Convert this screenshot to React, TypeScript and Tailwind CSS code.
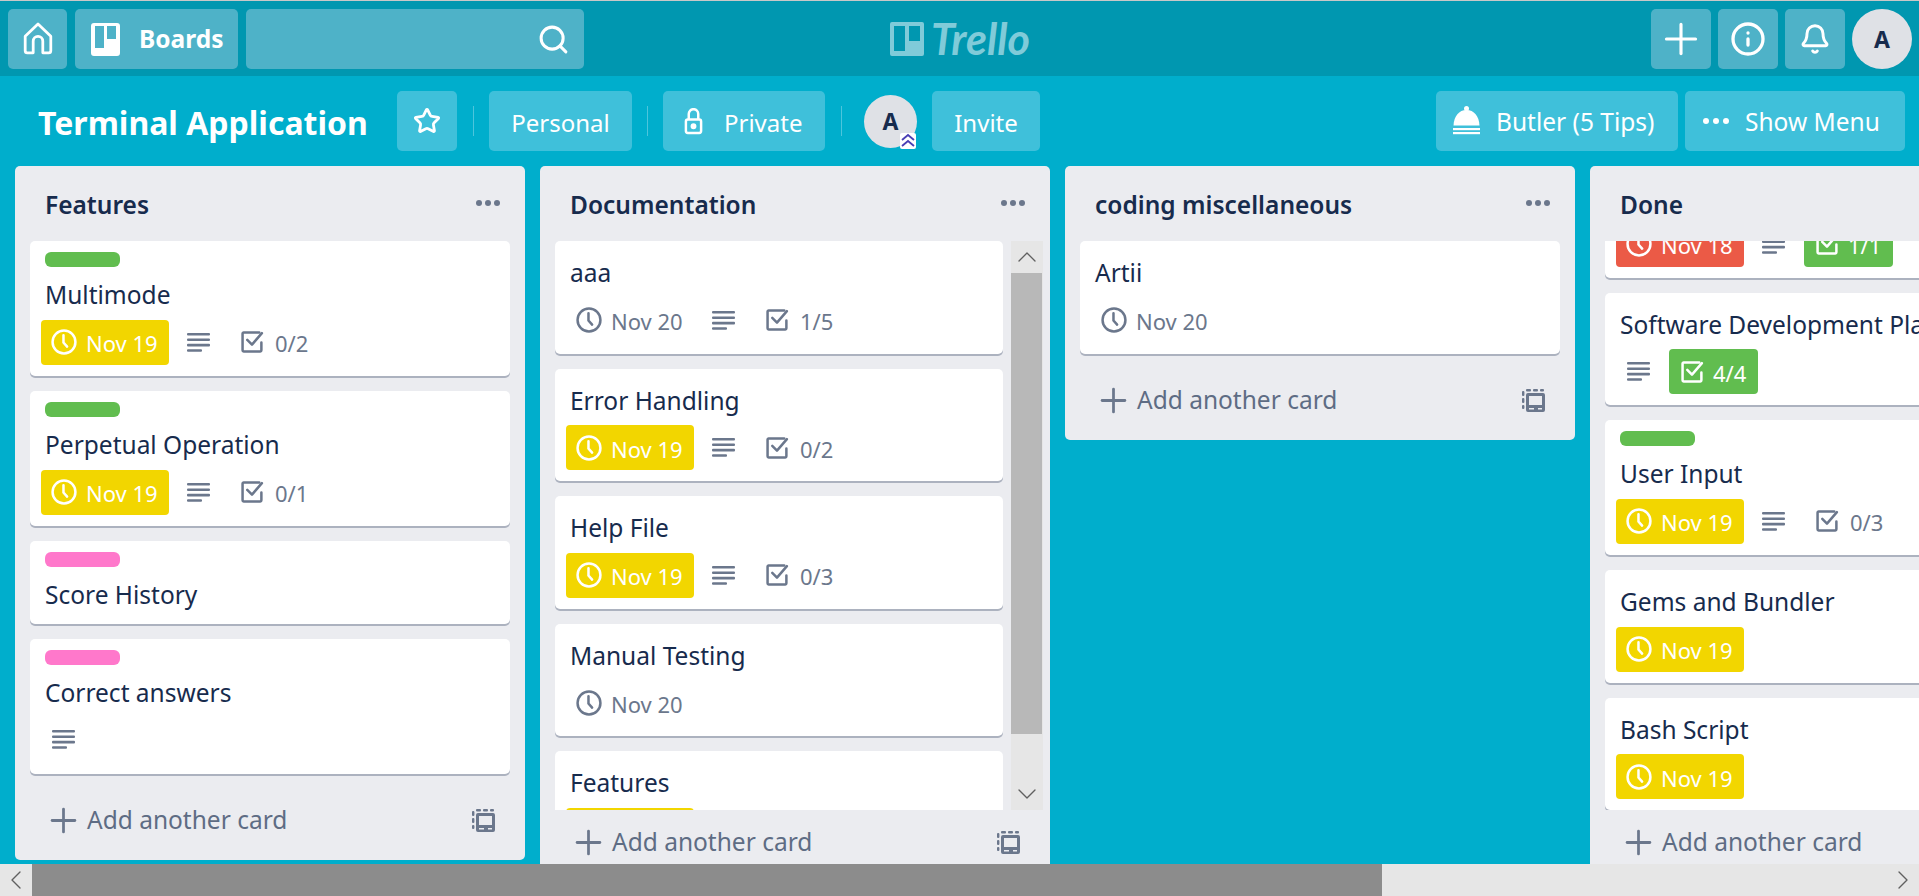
import { Bell, ChevronDown, ChevronLeft, ChevronRight, ChevronUp, Info, Plus, Search, Star } from 'lucide-react';
import type { ReactNode } from 'react';

type CardData = {
    title: string;
    label?: 'green' | 'pink';
    date?: string;
    dateTone?: 'yellow' | 'red' | 'plain';
    desc?: boolean;
    check?: string;
    checkDone?: boolean;
};

const features: CardData[] = [
    { title: 'Multimode', label: 'green', date: 'Nov 19', dateTone: 'yellow', desc: true, check: '0/2' },
    { title: 'Perpetual Operation', label: 'green', date: 'Nov 19', dateTone: 'yellow', desc: true, check: '0/1' },
    { title: 'Score History', label: 'pink' },
    { title: 'Correct answers', label: 'pink', desc: true },
];

const documentation: CardData[] = [
    { title: 'aaa', date: 'Nov 20', dateTone: 'plain', desc: true, check: '1/5' },
    { title: 'Error Handling', date: 'Nov 19', dateTone: 'yellow', desc: true, check: '0/2' },
    { title: 'Help File', date: 'Nov 19', dateTone: 'yellow', desc: true, check: '0/3' },
    { title: 'Manual Testing', date: 'Nov 20', dateTone: 'plain' },
    // only the top edge of this badge shows above the fold
    { title: 'Features', date: ' ', dateTone: 'yellow' },
];

const done: CardData[] = [
    // scrolled up, the title is out of view
    { title: '', date: 'Nov 18', dateTone: 'red', desc: true, check: '1/1', checkDone: true },
    { title: 'Software Development Plan', desc: true, check: '4/4', checkDone: true },
    { title: 'User Input', label: 'green', date: 'Nov 19', dateTone: 'yellow', desc: true, check: '0/3' },
    { title: 'Gems and Bundler', date: 'Nov 19', dateTone: 'yellow' },
    { title: 'Bash Script', date: 'Nov 19', dateTone: 'yellow' },
];

const ClockIcon = () => (
    <svg viewBox="0 0 25 25" className="h-[26px] w-[26px] shrink-0" fill="none" stroke="currentColor" strokeWidth="2.4" strokeLinecap="round">
        <circle cx="12.5" cy="12.5" r="11" />
        <path d="M12 6v7l3.5 4" />
    </svg>
);

const DescIcon = ({ className }: { className?: string }) => (
    <svg viewBox="0 0 23 19" className={`h-[19px] w-[23px] shrink-0 text-[#6b778c] ${className ?? ''}`} fill="currentColor">
        <rect y="0" width="23" height="2.6" rx="1" />
        <rect y="5.4" width="23" height="2.6" rx="1" />
        <rect y="10.8" width="23" height="2.6" rx="1" />
        <rect y="16.2" width="15" height="2.6" rx="1" />
    </svg>
);

const CheckIcon = () => (
    <svg viewBox="0 0 22 21" className="h-[22px] w-[23px] shrink-0" fill="none" stroke="currentColor" strokeWidth="2.4" strokeLinecap="round" strokeLinejoin="round">
        <path d="M19.5 11v7.5a1 1 0 0 1-1 1H2.5a1 1 0 0 1-1-1V2.5a1 1 0 0 1 1-1h15" />
        <path d="M6 8.5l4.5 4.5 9.5-11" />
    </svg>
);

const TemplateIcon = () => (
    <svg viewBox="0 0 23 23" className="h-[23px] w-[23px]" fill="#6b778c">
        <path fillRule="evenodd" d="M6 4h15a2 2 0 0 1 2 2v15a2 2 0 0 1-2 2H6a2 2 0 0 1-2-2V6a2 2 0 0 1 2-2zm1 3v9h13V7H7zm0 12v1.500h5V19H7zm9 0v1.500h4V19h-4z" />
        <rect x="4" y="0" width="5" height="2.4" rx="1" />
        <rect x="11" y="0" width="5" height="2.4" rx="1" />
        <rect x="18" y="0" width="4" height="2.4" rx="1" />
        <rect x="0" y="2" width="2.4" height="5" rx="1" />
        <rect x="0" y="9" width="2.4" height="5" rx="1" />
        <rect x="0" y="16" width="2.4" height="4" rx="1" />
    </svg>
);

const Card = ({ card }: { card: CardData }) => {
    const hasRow = card.date || card.desc || card.check;
    const height = card.label ? (hasRow ? 'h-[135px]' : 'h-[82.5px]') : 'h-[112.5px]';
    const tone = {
        yellow: 'bg-[#f2d600] text-white',
        red: 'bg-[#eb5a46] text-white',
        plain: 'text-[#6b778c]',
    }[card.dateTone ?? 'plain'];

    return (
        <div className={`mb-[15px] shrink-0 overflow-hidden rounded-[5px] bg-white shadow-[0_2px_0_rgba(9,30,66,0.28)] ${height}`}>
            {card.label && (
                <div className={`ml-[15px] mt-[11px] h-[15px] w-[75px] rounded-[6px] ${card.label === 'green' ? 'bg-[#61bd4f]' : 'bg-[#ff78cb]'}`}></div>
            )}
            <div className={`h-[34px] whitespace-nowrap pl-[15px] text-[24.5px] leading-[33px] text-[#172b4d] ${card.label ? 'mt-[11px]' : 'mt-[15px]'}`}>{card.title}</div>
            {hasRow && (
                <div className="ml-[11px] mt-[7.5px] flex h-[45px] items-center text-[22px]">
                    {card.date && (
                        <div className={`flex h-[45px] w-[128px] items-center gap-[9px] rounded-[4px] pl-[10px] ${tone}`}>
                            <ClockIcon />
                            <span className="pt-[3px]">{card.date}</span>
                        </div>
                    )}
                    {card.desc && <DescIcon className={card.date ? 'ml-[18px]' : 'ml-[11px]'} />}
                    {card.check && !card.checkDone && (
                        <div className="ml-[31px] flex items-center gap-[11px] text-[#6b778c]">
                            <CheckIcon />
                            <span className="pt-[3px]">{card.check}</span>
                        </div>
                    )}
                    {card.check && card.checkDone && (
                        <div className="ml-[19px] flex h-[45px] w-[89px] items-center gap-[9px] rounded-[4px] bg-[#61bd4f] pl-[12px] text-white">
                            <CheckIcon />
                            <span className="pt-[3px]">{card.check}</span>
                        </div>
                    )}
                </div>
            )}
        </div>
    );
};

const AddCard = () => (
    <div className="flex h-[71px] shrink-0 items-center pb-[7px] pl-[29px] pr-[30px]">
        <Plus className="h-[39px] w-[39px] shrink-0 text-[#6b778c]" strokeWidth={1.7} />
        <span className="ml-[4px] text-[24.5px] text-[#5e6c84]">Add another card</span>
        <div className="ml-auto">
            <TemplateIcon />
        </div>
    </div>
);

const ListHeader = ({ title }: { title: string }) => (
    <div className="flex h-[75px] shrink-0 items-center justify-between pl-[30px] pr-[25px] pt-[3px]">
        <h2 className="text-[24.5px] font-semibold text-[#172b4d]">{title}</h2>
        <div className="mb-[4px] flex gap-[3px]">
            <span className="h-[6px] w-[6px] rounded-full bg-[#6b778c]"></span>
            <span className="h-[6px] w-[6px] rounded-full bg-[#6b778c]"></span>
            <span className="h-[6px] w-[6px] rounded-full bg-[#6b778c]"></span>
        </div>
    </div>
);

const HeaderButton = ({ children, className }: { children: ReactNode; className?: string }) => (
    <div className={`flex h-[60px] items-center justify-center rounded-[5px] bg-[#4eb2c8] text-white ${className ?? ''}`}>{children}</div>
);

const BoardButton = ({ children, className }: { children: ReactNode; className?: string }) => (
    <div className={`flex h-[60px] items-center rounded-[5px] bg-[#3fc0da] text-[24px] text-white ${className ?? ''}`}>{children}</div>
);

const Divider = ({ className }: { className: string }) => <div className={`h-[30px] w-px bg-[#4dc5dc] ${className}`}></div>;

const Avatar = ({ size }: { size: string }) => (
    <div className={`flex items-center justify-center rounded-full bg-[#dfe1e6] text-[23px] font-bold text-[#172b4d] ${size}`}>A</div>
);

const App = () => {
    return (
        <div className="flex h-[896px] w-full flex-col overflow-hidden bg-[#00aecc] font-['Noto_Sans',sans-serif]">
            {/* Top nav */}
            <header className="relative flex h-[76px] shrink-0 items-start gap-[8px] border-t border-[#c8c8c8] bg-[#0097b0] pl-[8px] pr-[7px] pt-[8px]">
                <HeaderButton className="w-[59px]">
                    <svg viewBox="0 0 30 32" className="h-[36px] w-[32px]" fill="none" stroke="currentColor" strokeWidth="2.6" strokeLinejoin="round">
                        <path d="M3 13.5L15 2l12 11.5V27a2 2 0 0 1-2 2h-5.5V18a4.500 4.500 0 0 0-9 0v11H5a2 2 0 0 1-2-2z" />
                    </svg>
                </HeaderButton>
                <HeaderButton className="w-[163px] justify-start pl-[16px]">
                    <svg viewBox="0 0 29 33" className="h-[33px] w-[29px]" fill="currentColor">
                        <path fillRule="evenodd" d="M3 0h23a3 3 0 0 1 3 3v27a3 3 0 0 1-3 3H3a3 3 0 0 1-3-3V3a3 3 0 0 1 3-3zm1 3v22h9V3H4zm12 0v13h9V3h-9z" />
                    </svg>
                    <span className="ml-[19px] text-[24.5px] font-bold">Boards</span>
                </HeaderButton>
                <HeaderButton className="w-[338px] justify-end pr-[14px]">
                    <Search className="h-[33px] w-[33px]" strokeWidth={2.2} />
                </HeaderButton>

                {/* Logo */}
                <div className="absolute left-[890px] top-[15px] flex items-center text-[#80cbd9]">
                    <svg viewBox="0 0 34 34" className="h-[34px] w-[34px]" fill="currentColor">
                        <path fillRule="evenodd" d="M2 0h30a2 2 0 0 1 2 2v30a2 2 0 0 1-2 2H2a2 2 0 0 1-2-2V2a2 2 0 0 1 2-2zm2 4v25h11V4H4zm15 0v15h11V4H19z" />
                    </svg>
                    <span className="ml-[7px] font-['Lato',sans-serif] text-[43px] font-bold italic leading-[46px]">Trello</span>
                </div>

                <div className="ml-auto flex gap-[7px]">
                    <HeaderButton className="w-[60px]">
                        <Plus className="h-[50px] w-[50px]" strokeWidth={1.5} />
                    </HeaderButton>
                    <HeaderButton className="w-[60px]">
                        <Info className="h-[36px] w-[36px]" strokeWidth={2.2} />
                    </HeaderButton>
                    <HeaderButton className="w-[60px]">
                        <Bell className="h-[32px] w-[32px]" strokeWidth={2.2} />
                    </HeaderButton>
                    <Avatar size="h-[60px] w-[60px]" />
                </div>
            </header>

            {/* Board bar */}
            <div className="flex h-[90px] shrink-0 items-center pl-[38px] pr-[14px]">
                <h1 className="w-[359px] whitespace-nowrap pt-[3px] text-[32px] font-bold text-white">Terminal Application</h1>
                <BoardButton className="w-[60px] justify-center">
                    <Star className="h-[28px] w-[28px]" strokeWidth={2.4} />
                </BoardButton>
                <Divider className="mx-[15.5px]" />
                <BoardButton className="w-[143px] justify-center pt-[3px]">Personal</BoardButton>
                <Divider className="mx-[15px]" />
                <BoardButton className="w-[162px] pl-[21px]">
                    <svg viewBox="0 0 20 28" className="h-[27px] w-[19px]" fill="none" stroke="currentColor" strokeWidth="2.6">
                        <path d="M5 12V6a5 5 0 0 1 10 0v6" />
                        <rect x="2" y="12" width="16" height="14" rx="2" />
                        <circle cx="10" cy="19" r="1.800" fill="currentColor" />
                    </svg>
                    <span className="ml-[21px] pt-[3px]">Private</span>
                </BoardButton>
                <Divider className="mx-[15.5px]" />
                <div className="relative ml-[7px] mr-[15px]">
                    <Avatar size="h-[53px] w-[53px]" />
                    <div className="absolute bottom-[-1px] right-[1px] flex h-[16px] w-[16px] items-center justify-center rounded-[2px] bg-white">
                        <svg viewBox="0 0 16 16" className="h-[16px] w-[16px]" fill="none" stroke="#4a3fb5" strokeWidth="1.800">
                            <path d="M2 7l6-5 6 5" />
                            <path d="M2 13l6-5 6 5" />
                        </svg>
                    </div>
                </div>
                <BoardButton className="w-[108px] justify-center pt-[3px]">Invite</BoardButton>

                <BoardButton className="ml-auto w-[242px] pl-[17px]">
                    <svg viewBox="0 0 27 30" className="h-[30px] w-[27px]" fill="currentColor">
                        <circle cx="13.500" cy="2.500" r="2.500" />
                        <path d="M13.500 4C6 4 1 10 0.500 19.500h26C26 10 21 4 13.500 4z" />
                        <rect x="0" y="22" width="27" height="2.200" />
                        <rect x="0" y="26" width="27" height="2.200" />
                    </svg>
                    <span className="ml-[16px] whitespace-nowrap pt-[3px] text-[24.5px]">Butler (5 Tips)</span>
                </BoardButton>
                <BoardButton className="ml-[7px] w-[220px] pl-[18px]">
                    <div className="flex gap-[4px]">
                        <span className="h-[6px] w-[6px] rounded-full bg-white"></span>
                        <span className="h-[6px] w-[6px] rounded-full bg-white"></span>
                        <span className="h-[6px] w-[6px] rounded-full bg-white"></span>
                    </div>
                    <span className="ml-[16px] whitespace-nowrap pt-[3px] text-[24.5px]">Show Menu</span>
                </BoardButton>
            </div>

            {/* Lists */}
            <div className="flex min-h-0 flex-1 items-start gap-[15px] overflow-hidden pl-[15px]">
                <section className="w-[510px] shrink-0 rounded-[5px] bg-[#ebecf0]">
                    <ListHeader title="Features" />
                    <div className="px-[15px]">
                        {features.map((card) => (
                            <Card key={card.title} card={card} />
                        ))}
                    </div>
                    <AddCard />
                </section>

                <section className="flex h-[739px] w-[510px] shrink-0 flex-col rounded-[5px] bg-[#ebecf0]">
                    <ListHeader title="Documentation" />
                    <div className="flex h-[569px] shrink-0 overflow-hidden pl-[15px] pr-[7px]">
                        <div className="w-[448px] shrink-0">
                            {documentation.map((card) => (
                                <Card key={card.title} card={card} />
                            ))}
                        </div>
                        <div className="ml-[8px] flex w-[32px] shrink-0 flex-col bg-[#e6e6e6]">
                            <div className="flex h-[32px] shrink-0 items-center justify-center">
                                <ChevronUp className="h-[32px] w-[32px] text-[#606060]" strokeWidth={1} />
                            </div>
                            <div className="h-[461px] w-[31px] shrink-0 bg-[#b8b8b8]"></div>
                            <div className="mt-auto flex h-[32px] shrink-0 items-center justify-center">
                                <ChevronDown className="h-[32px] w-[32px] text-[#606060]" strokeWidth={1} />
                            </div>
                        </div>
                    </div>
                    <AddCard />
                </section>

                <section className="w-[510px] shrink-0 rounded-[5px] bg-[#ebecf0]">
                    <ListHeader title="coding miscellaneous" />
                    <div className="px-[15px]">
                        <Card card={{ title: 'Artii', date: 'Nov 20', dateTone: 'plain' }} />
                    </div>
                    <AddCard />
                </section>

                <section className="flex h-[739px] w-[510px] shrink-0 flex-col rounded-[5px] bg-[#ebecf0]">
                    <ListHeader title="Done" />
                    <div className="h-[569px] shrink-0 overflow-hidden px-[15px]">
                        <div className="-mt-[76px]">
                            {done.map((card) => (
                                <Card key={card.title} card={card} />
                            ))}
                        </div>
                    </div>
                    <AddCard />
                </section>
            </div>

            {/* Horizontal scrollbar */}
            <div className="flex h-[32px] shrink-0 items-center bg-[#e6e6e6]">
                <div className="flex w-[32px] shrink-0 items-center justify-center">
                    <ChevronLeft className="h-[32px] w-[32px] text-[#606060]" strokeWidth={1} />
                </div>
                <div className="h-[32px] w-[1350px] shrink-0 bg-[#8c8c8c]"></div>
                <div className="ml-auto flex w-[32px] shrink-0 items-center justify-center">
                    <ChevronRight className="h-[32px] w-[32px] text-[#606060]" strokeWidth={1} />
                </div>
            </div>
        </div>
    );
};

export default App;
